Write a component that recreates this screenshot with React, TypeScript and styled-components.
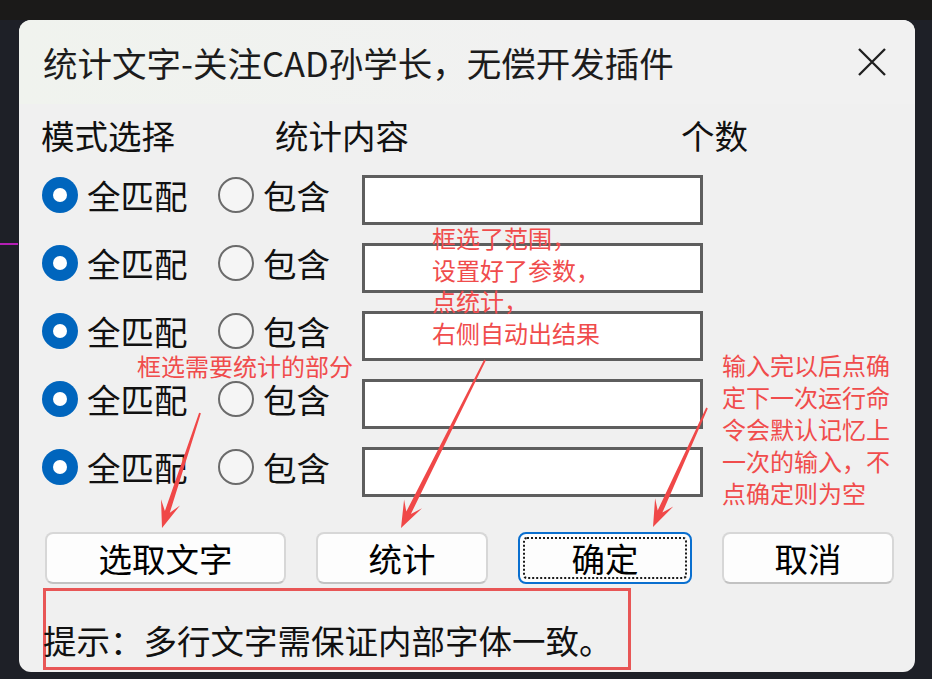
import React from "react";
import styled, { createGlobalStyle } from "styled-components";

const GlobalStyle = createGlobalStyle`
  html, body {
    margin: 0;
    padding: 0;
    background: #1d1e22;
  }
  * { box-sizing: border-box; }
`;

const FONT = `"Noto Sans CJK SC", "Microsoft YaHei", "Noto Sans", sans-serif`;

const Page = styled.div`
  position: relative;
  width: 932px;
  height: 679px;
  padding: 20px 0 0 19px;
  overflow: hidden;
  background: linear-gradient(180deg, #1b1a19 0px, #1b1a19 20px, #1e2027 20px);
  font-family: ${FONT};
`;

const CadMark = styled.span`
  position: absolute;
  left: 0;
  top: 243px;
  width: 18px;
  height: 2px;
  background: #b41fb4;
`;

const Window = styled.div`
  width: 896px;
  height: 652px;
  border-radius: 12px;
  background: #f0f0f0;
  display: flex;
  flex-direction: column;
  overflow: hidden;
`;

const TitleBar = styled.div`
  height: 84px;
  flex: none;
  display: flex;
  align-items: center;
  justify-content: space-between;
  padding: 0 28px 0 24px;
  background: linear-gradient(90deg, #f0f3ee 0%, #f1f1f1 60%, #f1f1f1 100%);
`;

const Title = styled.div`
  font-size: 34.5px;
  line-height: 40px;
  color: #1c1c1c;
  white-space: nowrap;
`;

const CloseButton = styled.div`
  width: 30px;
  height: 30px;
  display: flex;
  align-items: center;
  justify-content: center;
`;

const Content = styled.div`
  padding: 11px 0 0 22px;
  display: flex;
  flex-direction: column;
`;

const Header = styled.div`
  display: grid;
  grid-template-columns: 234px 406px auto;
  height: 40px;
  align-items: center;
  font-size: 33.5px;
  line-height: 40px;
  color: #111;
  margin-bottom: 20px;
`;

const Rows = styled.div`
  display: flex;
  flex-direction: column;
  gap: 18px;
  margin-left: 1px;
`;

const Row = styled.div`
  display: grid;
  grid-template-columns: 176px 144px 341px;
  height: 50px;
  align-items: center;
`;

const RadioOption = styled.label`
  display: flex;
  align-items: center;
  gap: 9px;
  padding-bottom: 10px;
  font-size: 33.5px;
  line-height: 40px;
  color: #111;
`;

const RadioCircle = styled.span<{ $checked: boolean }>`
  width: 36px;
  height: 36px;
  border-radius: 50%;
  flex: none;
  display: flex;
  align-items: center;
  justify-content: center;
  background: ${(p) => (p.$checked ? "#0065bd" : "#f5f5f5")};
  border: ${(p) => (p.$checked ? "none" : "2.5px solid #6b6b6b")};
  &::after {
    content: "";
    display: ${(p) => (p.$checked ? "block" : "none")};
    width: 14px;
    height: 14px;
    border-radius: 50%;
    background: #ffffff;
  }
`;

const TextBox = styled.div`
  width: 341px;
  height: 50px;
  background: #ffffff;
  border: 3px solid #5e5e5e;
`;

const ButtonRow = styled.div`
  display: flex;
  gap: 30px;
  margin-top: 35px;
  padding-left: 4px;
`;

const Button = styled.div<{ $width: number; $focused?: boolean }>`
  position: relative;
  width: ${(p) => p.$width}px;
  height: 52px;
  border-radius: 8px;
  background: #fdfdfd;
  border: ${(p) => (p.$focused ? "2.5px solid #0a6fcf" : "2px solid #d7d7d7")};
  border-bottom-color: ${(p) => (p.$focused ? "#0a6fcf" : "#c2c2c2")};
  display: flex;
  align-items: center;
  justify-content: center;
  font-size: 33.5px;
  line-height: 40px;
  color: #000;
  &::after {
    content: "";
    display: ${(p) => (p.$focused ? "block" : "none")};
    position: absolute;
    inset: 3px;
    border: 2px dotted #1a1a1a;
    border-radius: 4px;
  }
`;

const HintBox = styled.div`
  margin-top: 4px;
  margin-left: 2px;
  width: 588px;
  height: 82px;
  border: 3px solid #e85656;
  display: flex;
  align-items: center;
  padding-top: 22px;
`;

const HintText = styled.div`
  margin-left: -3px;
  font-size: 33.5px;
  line-height: 40px;
  color: #111;
  white-space: nowrap;
`;

const Overlay = styled.svg`
  position: absolute;
  left: 0;
  top: 0;
  pointer-events: none;
`;

const Note = styled.div<{ $x: number; $y: number; $lh?: number }>`
  position: absolute;
  left: ${(p) => p.$x}px;
  top: ${(p) => p.$y}px;
  font-family: ${FONT};
  font-size: 24px;
  line-height: ${(p) => p.$lh ?? 31.6}px;
  color: #f04c4c;
  white-space: nowrap;
  pointer-events: none;
`;

function arrowPoints(x1: number, y1: number, x2: number, y2: number) {
  const dx = x2 - x1;
  const dy = y2 - y1;
  const L = Math.hypot(dx, dy);
  const ux = dx / L;
  const uy = dy / L;
  const nx = -uy;
  const ny = ux;
  const p = (d: number, w: number) => [x2 - ux * d + nx * w, y2 - uy * d + ny * w];
  const pts = [
    [x1 + nx * 0.9, y1 + ny * 0.9],
    p(17, 2.6),
    p(27, 10),
    [x2, y2],
    p(27, -10),
    p(17, -2.6),
    [x1 - nx * 0.9, y1 - ny * 0.9],
  ];
  return pts.map((q) => `${q[0].toFixed(1)},${q[1].toFixed(1)}`).join(" ");
}

const arrows = [
  [200, 413, 162, 528],
  [485, 360, 401, 528],
  [707, 408, 653, 527],
];

const Radio: React.FC<{ checked: boolean; label: string }> = ({ checked, label }) => (
  <RadioOption>
    <RadioCircle $checked={checked} />
    {label}
  </RadioOption>
);

export default function App() {
  return (
    <>
      <GlobalStyle />
      <Page>
        <CadMark />
        <Window>
          <TitleBar>
            <Title>统计文字-关注CAD孙学长，无偿开发插件</Title>
            <CloseButton>
              <svg width="30" height="30" viewBox="0 0 30 30">
                <path d="M2 2 L28 28 M28 2 L2 28" stroke="#1f1f1f" strokeWidth="2.3" fill="none" />
              </svg>
            </CloseButton>
          </TitleBar>
          <Content>
            <Header>
              <span>模式选择</span>
              <span>统计内容</span>
              <span>个数</span>
            </Header>
            <Rows>
              {[0, 1, 2, 3, 4].map((i) => (
                <Row key={i}>
                  <Radio checked label="全匹配" />
                  <Radio checked={false} label="包含" />
                  <TextBox />
                </Row>
              ))}
            </Rows>
            <ButtonRow>
              <Button $width={241}>选取文字</Button>
              <Button $width={172}>统计</Button>
              <Button $width={174} $focused>
                确定
              </Button>
              <Button $width={172}>取消</Button>
            </ButtonRow>
            <HintBox>
              <HintText>提示：多行文字需保证内部字体一致。</HintText>
            </HintBox>
          </Content>
        </Window>

        <Note $x={137} $y={350}>框选需要统计的部分</Note>
        <Note $x={432} $y={222}>
          框选了范围，
          <br />
          设置好了参数，
          <br />
          点统计，
          <br />
          右侧自动出结果
        </Note>
        <Note $x={722} $y={349} $lh={32}>
          输入完以后点确
          <br />
          定下一次运行命
          <br />
          令会默认记忆上
          <br />
          一次的输入，不
          <br />
          点确定则为空
        </Note>
        <Overlay width={932} height={679} viewBox="0 0 932 679">
          {arrows.map((a, i) => (
            <polygon key={i} points={arrowPoints(a[0], a[1], a[2], a[3])} fill="#f04848" />
          ))}
        </Overlay>
      </Page>
    </>
  );
}
